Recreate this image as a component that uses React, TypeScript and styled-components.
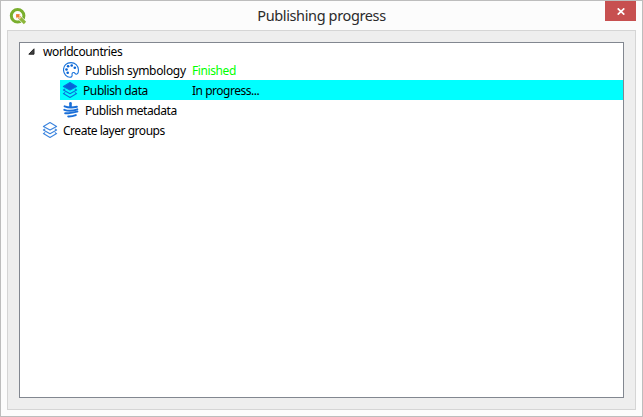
import React from "react";
import styled, { createGlobalStyle } from "styled-components";

const GlobalStyle = createGlobalStyle`
  * { box-sizing: border-box; }
  html, body { margin: 0; overflow: hidden; }
`;

const Dialog = styled.div`
  width: 643px;
  height: 417px;
  display: flex;
  flex-direction: column;
  padding: 0 6px 6px;
  border: 1px solid #bdbdbd;
  background: #fcfcfc;
  color: #000;
  font-family: "Noto Sans", "Open Sans", sans-serif;
`;

const TitleBar = styled.header`
  display: grid;
  grid-template-columns: 32px 1fr 32px;
  height: 29px;
  flex: none;
  margin-right: -1px;
`;

const AppLogo = styled.svg`
  width: 18px;
  height: 18px;
  margin: 6px 0 0 2px;
`;

const Title = styled.h1`
  margin: 0 0 0 -1px;
  padding-top: 4px;
  text-align: center;
  font-size: 14.5px;
  line-height: 20px;
  font-weight: 400;
  letter-spacing: -0.37px;
  color: #2b2b2b;
  white-space: nowrap;
`;

const CloseButton = styled.button`
  display: flex;
  justify-content: center;
  align-items: center;
  width: 31px;
  height: 20px;
  padding: 0;
  border: 0;
  background: #c75050;
`;

const Body = styled.main`
  flex: 1;
  min-height: 0;
  padding: 11px;
  border: 1px solid #d5d5d5;
  background: #eee;
`;

const Tree = styled.div`
  height: 100%;
  border: 1px solid #828790;
  background: #fff;
`;

const Row = styled.div<{ $indent: number; $height?: number; $active?: boolean }>`
  display: flex;
  align-items: center;
  height: ${(p) => p.$height ?? 20}px;
  margin-left: ${(p) => p.$indent}px;
  background: ${(p) => (p.$active ? "#00ffff" : "transparent")};
`;

const Cell = styled.div<{ $width: number }>`
  display: flex;
  align-items: center;
  width: ${(p) => p.$width}px;
  height: 100%;
`;

const Label = styled.span<{ $gap?: number; $spacing?: number; $color?: string }>`
  margin-left: ${(p) => p.$gap ?? 0}px;
  padding-top: 2px;
  font-size: 12px;
  line-height: 16px;
  letter-spacing: ${(p) => p.$spacing ?? -0.4}px;
  color: ${(p) => p.$color ?? "#000"};
  white-space: nowrap;
`;

const RootLabel = styled(Label)`
  padding-top: 1px;
`;

const Glyph = styled.svg<{ $left?: number }>`
  width: 16px;
  height: 16px;
  flex: none;
  margin-left: ${(p) => p.$left ?? 3}px;
`;

const Arrow = styled.svg`
  width: 7px;
  height: 7px;
  flex: none;
  margin-left: 8px;
`;

const QgisLogo = () => (
  <AppLogo viewBox="0 0 18 18">
    <circle cx="8.6" cy="8.8" r="6.3" fill="none" stroke="#79ae2d" strokeWidth="3" />
    <path d="M9 9l6.5 6.5" stroke="#fcfcfc" strokeWidth="4.4" />
    <path d="M10 10l6 6" stroke="#8cb63a" strokeWidth="3.2" />
    <path d="M7 7h4.5L10.5 8.5l2 2-2 2-2-2L7 11.5z" fill="#f5c09a" />
    <path d="M7.2 7.2h3v3h-3z" fill="#ec7c32" />
  </AppLogo>
);

const Palette = () => (
  <Glyph viewBox="0 0 16 16">
    <path
      d="M8 .6C3.6.6.5 3.8.5 7.7c0 4.2 3.2 7.5 6.4 7.5 1.7 0 2.4-1 2.2-2.3-.2-1.8.5-2.6 1.9-2.4 1 .2 1.1 1.8 2.4 1.7 1.3-.1 2.1-2.3 2-4.6C15.2 3.7 12.2.6 8 .6z"
      fill="#fff" stroke="#1873db" strokeWidth="1.1"
    />
    <g fill="#0762d4">
      <circle cx="8.7" cy="3.5" r="1.3" />
      <circle cx="5.1" cy="4.3" r="1.3" />
      <circle cx="3.5" cy="7.5" r="1.3" />
      <circle cx="4.7" cy="10.8" r="1.3" />
      <circle cx="11.8" cy="5.8" r="1.3" />
    </g>
  </Glyph>
);

const Layers = ({ filled = false, left }: { filled?: boolean; left?: number }) => (
  <Glyph viewBox="0 0 16 16" $left={left}>
    <g fill="none" stroke={filled ? "#0870da" : "#3b84de"} strokeWidth="1.1" strokeLinejoin="round">
      <path d="M8 .6l6.6 3.8L8 8.1 1.4 4.4z" fill={filled ? "#0764d9" : "none"} />
      <path d="M3.2 6.9L1.4 8 8 11.7 14.6 8l-1.8-1.1" />
      <path d="M3.2 10.5l-1.8 1.1L8 15.4l6.6-3.8-1.8-1.1" />
    </g>
  </Glyph>
);

const Metadata = () => (
  <Glyph viewBox="0 0 16 16">
    <g fill="none" stroke="#1a6fd8" strokeLinecap="round">
      <path d="M7.5 1.3v3" strokeWidth="2.6" />
      <path d="M1.6 4.4c3.7 1.4 8.5 1.3 12.3.4" strokeWidth="2" />
      <path d="M1.3 7.9c4.2 1.5 8.7 1.1 13-.5" strokeWidth="2" />
      <path d="M2.2 11.3c4 .3 7.8-.7 12.2-1.8" strokeWidth="2" />
      <path d="M5.2 14.4c2.8.1 5.3-.4 7.6-1.3" strokeWidth="2" />
    </g>
  </Glyph>
);

export default function App() {
  return (
    <>
      <GlobalStyle />
      <Dialog>
        <TitleBar>
          <QgisLogo />
          <Title>Publishing progress</Title>
          <CloseButton aria-label="Close">
            <svg width="8" height="7" viewBox="0 0 8 7">
              <path d="M.7.4l6.6 6.2M7.3.4L.7 6.6" stroke="#fff" strokeWidth="1.7" />
            </svg>
          </CloseButton>
        </TitleBar>
        <Body>
          <Tree>
            <Row $indent={0} $height={17}>
              <Arrow viewBox="0 0 7 7">
                <path d="M6 .8v5.4H.8z" fill="#404040" stroke="#262626" />
              </Arrow>
              <RootLabel $gap={8}>worldcountries</RootLabel>
            </Row>
            <Row $indent={40}>
              <Cell $width={132}>
                <Palette />
                <Label $gap={6} $spacing={-0.32}>Publish symbology</Label>
              </Cell>
              <Label $color="#00ff00">Finished</Label>
            </Row>
            <Row $indent={40} $active>
              <Cell $width={132}>
                <Layers filled left={2} />
                <Label $gap={5}>Publish data</Label>
              </Cell>
              <Label $spacing={-0.48}>In progress...</Label>
            </Row>
            <Row $indent={40}>
              <Cell $width={132}>
                <Metadata />
                <Label $gap={6} $spacing={-0.44}>Publish metadata</Label>
              </Cell>
            </Row>
            <Row $indent={20}>
              <Layers left={2} />
              <Label $gap={5} $spacing={-0.47}>Create layer groups</Label>
            </Row>
          </Tree>
        </Body>
      </Dialog>
    </>
  );
}
